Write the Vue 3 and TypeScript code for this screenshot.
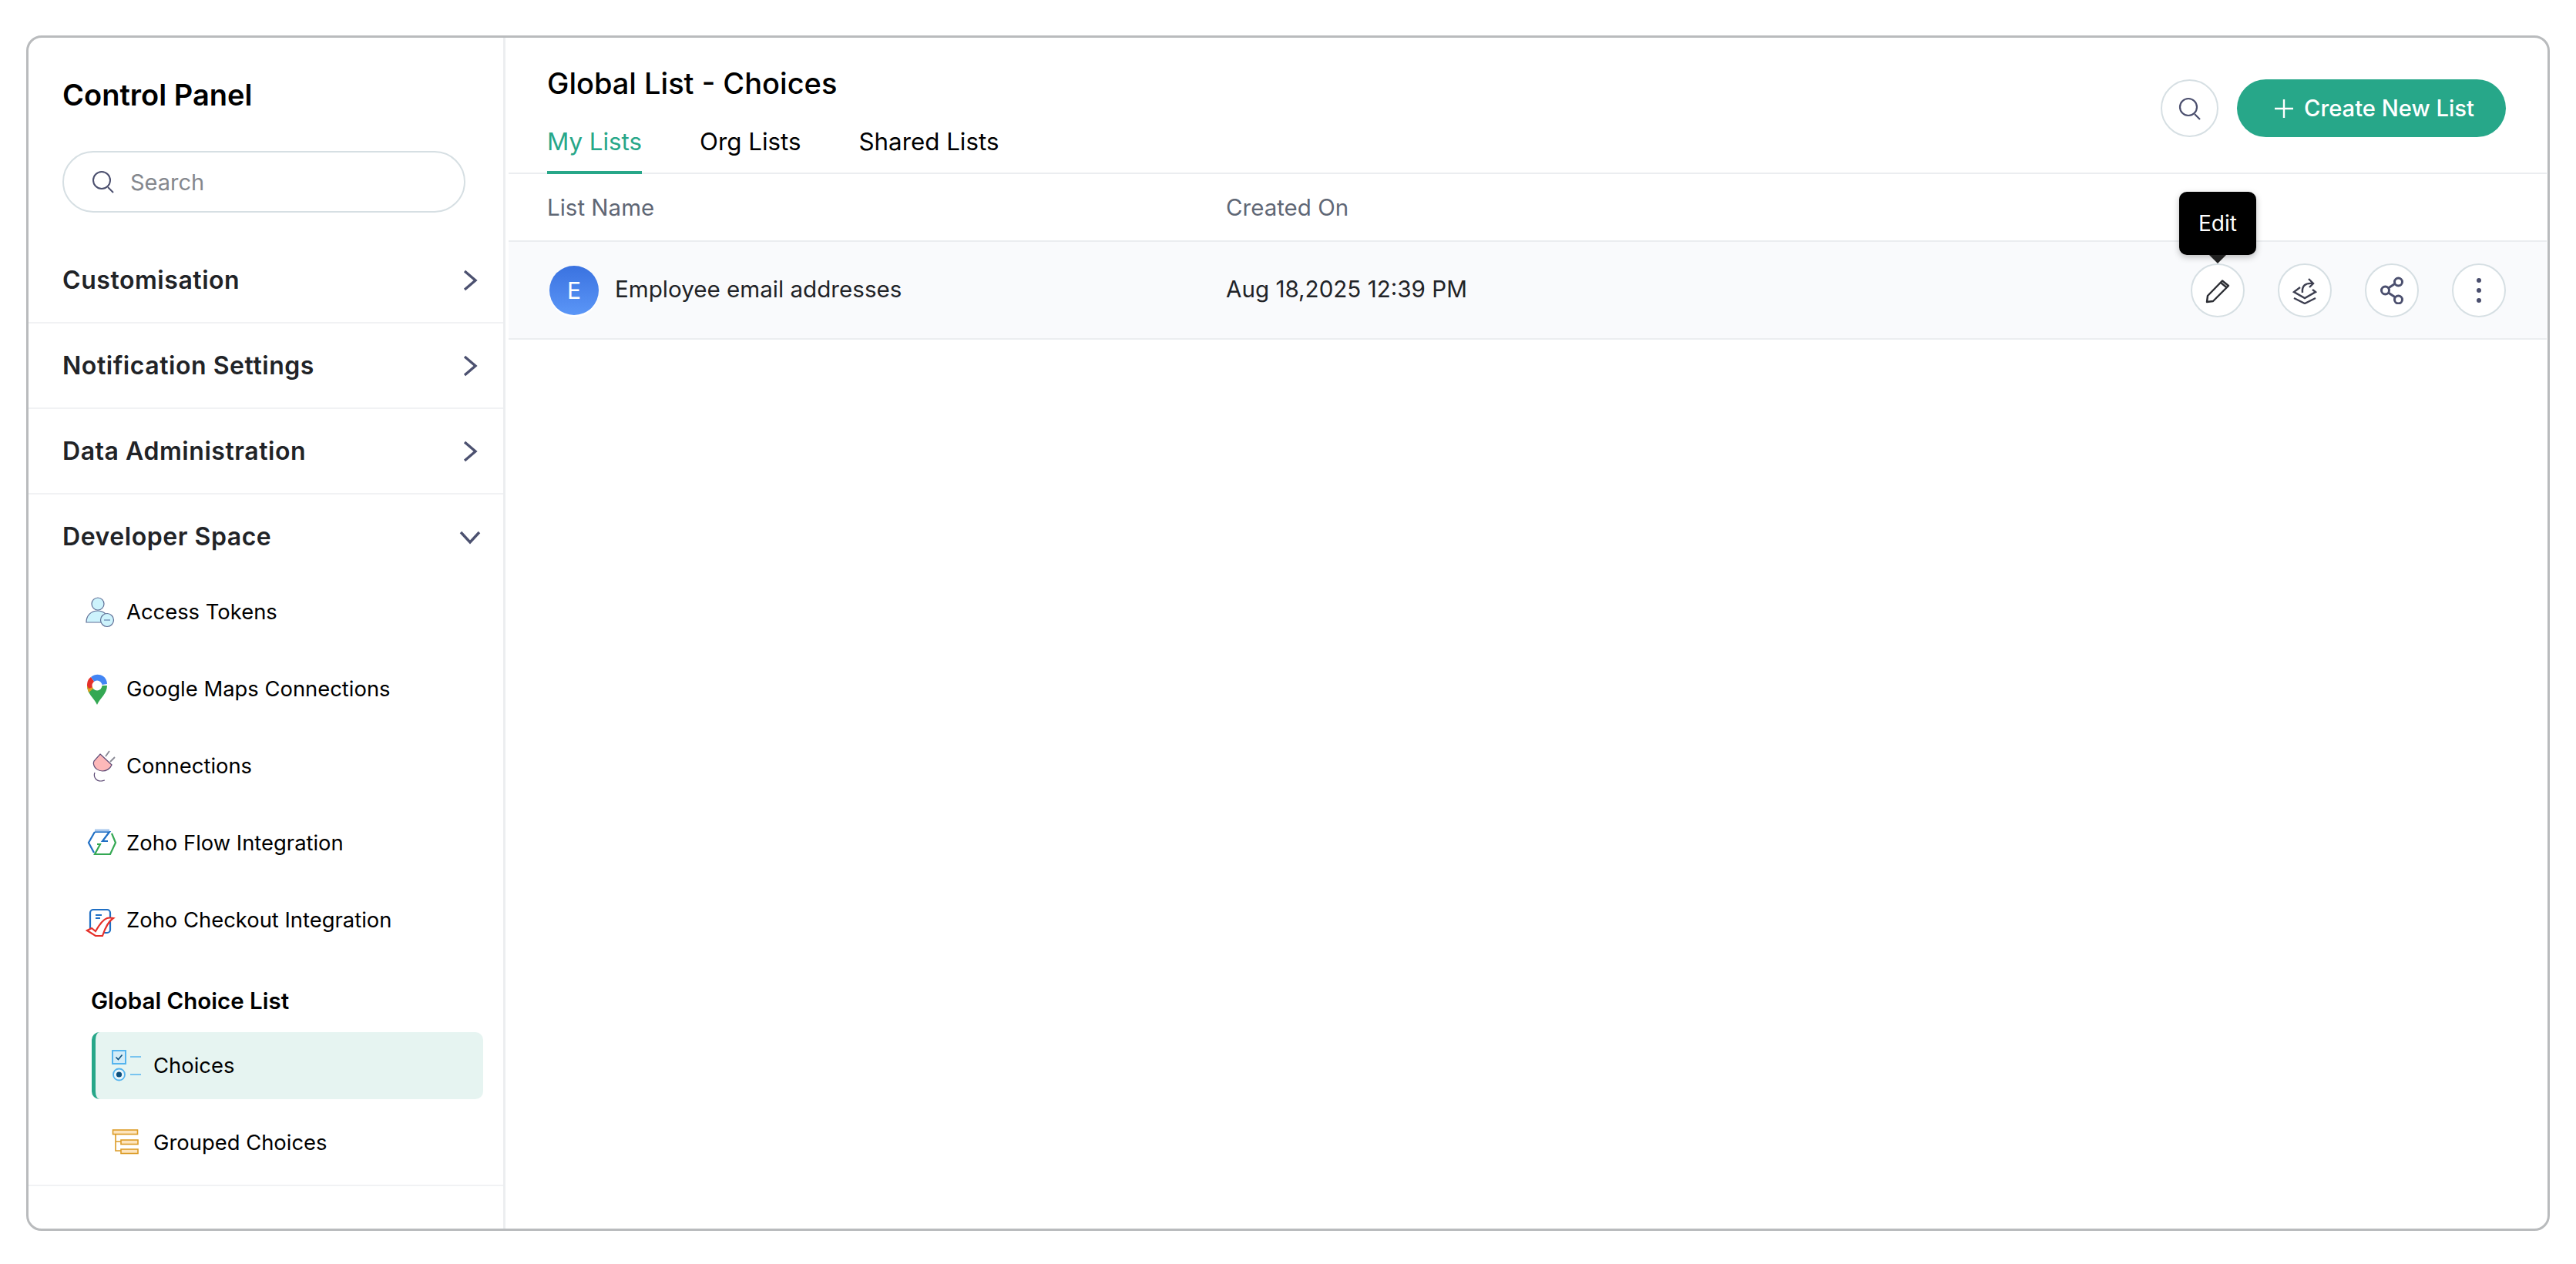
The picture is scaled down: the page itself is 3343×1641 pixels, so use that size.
<template>
  <div class="page">
    <div class="frame">
      <aside class="sidebar">
        <h2 class="side-title">Control Panel</h2>
        <div class="side-search">
          <svg class="search-icon" viewBox="0 0 32 32" fill="none">
            <circle cx="14" cy="14" r="11" stroke="#4b4f6e" stroke-width="2" />
            <path d="M22 23l7 7" stroke="#4b4f6e" stroke-width="2" />
          </svg>
          <span>Search</span>
        </div>

        <div v-for="row in closedRows" :key="row" class="acc-row">
          <span>{{ row }}</span>
          <svg class="chev" viewBox="0 0 28 28" fill="none">
            <path d="M7 2l14 12L7 26" stroke="#4c5170" stroke-width="3.4" />
          </svg>
        </div>

        <div class="acc-open">
          <div class="acc-head">
            <span>Developer Space</span>
            <svg class="chev" viewBox="0 0 28 28" fill="none">
              <path d="M2 8l12 13L26 8" stroke="#4c5170" stroke-width="3.4" />
            </svg>
          </div>

          <div class="sub-list">
            <div class="sub-item">
              <svg class="item-icon" viewBox="0 0 44 44" fill="none" stroke="#5f6f96" stroke-width="1.2">
                <circle cx="21" cy="14" r="8" fill="#cdf3fc" />
                <path d="M6 38c0-9 6-15 15-15 4 0 7 1 10 4v11z" fill="#cdf3fc" />
                <circle cx="33" cy="35" r="8.5" fill="#cdf3fc" />
                <path d="M29 35h8" stroke="#7d9cc0" stroke-width="1.6" />
              </svg>
              <span>Access Tokens</span>
            </div>
            <div class="sub-item">
              <svg class="item-icon" viewBox="0 0 44 44">
                <path d="M20 45C16 36 7 31 7 20h26c0 11-9 16-13 25z" fill="#34a853" />
                <path d="M9 29l11-9-6-4-7 4c0 3 1 6 2 9z" fill="#dca11f" />
                <path d="M7 20C7 14 9 11 12 9l8 11-11 4z" fill="#e5302a" />
                <path d="M12 9c5-4 11-4 16-1 3 2 5 6 5 10l-13 2z" fill="#4285f4" />
                <circle cx="20" cy="20" r="6.5" fill="#fff" />
              </svg>
              <span>Google Maps Connections</span>
            </div>
            <div class="sub-item">
              <svg class="item-icon" viewBox="0 0 44 44" fill="none" stroke="#5d4a75" stroke-width="1.2">
                <path d="M24 9l15 14c-2 5-7 8-12 8-6 0-10-4-11-7-1-2-1-4 0-6z" fill="#fdb8b9" />
                <path d="M31 12l5-7M37 19l6-6" stroke="#8a8a95" stroke-width="1.8" />
                <path d="M17 33c-2 5 1 11 8 11 2 0 4-1 5-1" />
              </svg>
              <span>Connections</span>
            </div>
            <div class="sub-item">
              <svg class="item-icon" viewBox="0 0 44 44" fill="none" stroke-width="2.2">
                <path d="M17 9h19l-9 12h7M17 9L9 23l7 13" stroke="#1f6fc4" />
                <path d="M17 7h19" stroke="#a8c7ec" stroke-width="3" />
                <path d="M39 11l5 12-7 15H17l7-13h-4" stroke="#34a853" />
              </svg>
              <span>Zoho Flow Integration</span>
            </div>
            <div class="sub-item">
              <svg class="item-icon" viewBox="0 0 44 44" fill="none">
                <rect x="11" y="10" width="26" height="30" rx="4" stroke="#1f6fc4" stroke-width="2.2" />
                <path d="M18 17h8M18 21h6" stroke="#1f6fc4" stroke-width="2" />
                <path d="M7 37l6-3 5 4c4-7 9-15 15-17 3-1 8 0 8 0-6 4-11 14-14 23h-9z" fill="#fff" stroke="#e5302a" stroke-width="2.2" />
              </svg>
              <span>Zoho Checkout Integration</span>
            </div>
          </div>

          <div class="group-title">Global Choice List</div>
          <div class="group-item active">
            <svg class="item-icon" viewBox="0 0 44 44" fill="none">
              <rect x="5" y="3" width="17" height="17" fill="#d4ecf7" stroke="#55b4ee" stroke-width="2" />
              <path d="M9.500 11.500l3 3 5-6" stroke="#0d4f7c" stroke-width="1.6" />
              <path d="M28 11h14M28 34h14" stroke="#55b4ee" stroke-width="1.5" />
              <circle cx="13.500" cy="34" r="7.500" fill="#eaf6fb" stroke="#55b4ee" stroke-width="1.8" />
              <circle cx="13.500" cy="34" r="3.600" fill="#0d4f7c" />
            </svg>
            <span>Choices</span>
          </div>
          <div class="group-item">
            <svg class="item-icon" viewBox="0 0 44 44" fill="none" stroke="#dc9c27" stroke-width="1.6">
              <path d="M9 12v21h7M9 21h7" />
              <rect x="5.500" y="6" width="32" height="5.500" fill="#fde4bd" />
              <rect x="16" y="19" width="22" height="5.500" fill="#fde4bd" />
              <rect x="16" y="31" width="22" height="5.500" fill="#fde4bd" />
            </svg>
            <span>Grouped Choices</span>
          </div>
        </div>
      </aside>

      <main class="main">
        <header class="head">
          <div>
            <h1 class="title">Global List - Choices</h1>
            <nav class="tabs">
              <a v-for="t in tabs" :key="t" class="tab" :class="{ on: t === activeTab }">{{ t }}</a>
            </nav>
          </div>
          <div class="head-actions">
            <button class="search-btn">
              <svg viewBox="0 0 32 32" fill="none">
                <circle cx="14" cy="14" r="11" stroke="#4b4f6e" stroke-width="2.2" />
                <path d="M22 23l7 7" stroke="#4b4f6e" stroke-width="2.2" />
              </svg>
            </button>
            <button class="create-btn">
              <svg viewBox="0 0 26 26" fill="none">
                <path d="M13 1v24M1 13h24" stroke="#fff" stroke-width="2.4" />
              </svg>
              Create New List
            </button>
          </div>
        </header>

        <div class="table-head">
          <span class="col-name">List Name</span>
          <span>Created On</span>
        </div>

        <div class="table-row">
          <div class="col-name name-cell">
            <span class="avatar">E</span>
            <span class="cell-text">Employee email addresses</span>
          </div>
          <span class="cell-text date">Aug 18,2025 12:39 PM</span>
          <div class="row-actions">
            <button class="icon-btn">
              <span class="tooltip">Edit</span>
              <svg viewBox="0 0 36 36" fill="none" stroke="#2b2d33" stroke-width="2.4">
                <path d="M4 33l1-8L24 5.500 32 12 12 32z" stroke-linejoin="round" />
                <path d="M22 8l8 6.500" />
              </svg>
            </button>
            <button class="icon-btn">
              <svg viewBox="0 0 36 36" fill="none" stroke="#3d3f50" stroke-width="2.4">
                <path d="M4 28l14 7 14-7" />
                <path d="M12 14L4 20l14 8 14-8-4-3" />
                <path d="M15 21c-1-9 4-13 13-12M23 3l6 6-5 5" />
              </svg>
            </button>
            <button class="icon-btn">
              <svg viewBox="0 0 36 36" fill="none" stroke="#4b4f6e" stroke-width="3">
                <circle cx="26.500" cy="7" r="5" />
                <circle cx="9.500" cy="18" r="5" />
                <circle cx="26.500" cy="30" r="5" />
                <path d="M13.500 15l9-6M13.500 21l9 6" />
              </svg>
            </button>
            <button class="icon-btn">
              <svg viewBox="0 0 36 36" fill="#4b4f6e">
                <circle cx="18" cy="5" r="3" />
                <circle cx="18" cy="18" r="3" />
                <circle cx="18" cy="31" r="3" />
              </svg>
            </button>
          </div>
        </div>
      </main>
    </div>
  </div>
</template>

<script setup lang="ts">
const closedRows: string[] = ['Customisation', 'Notification Settings', 'Data Administration']
const tabs: string[] = ['My Lists', 'Org Lists', 'Shared Lists']
const activeTab = 'My Lists'
</script>

<style>
html,
body {
  background: #fff;
}
</style>

<style scoped>
.page {
  box-sizing: border-box;
  height: 1641px;
  padding: 46px 34px 43px 34px;
  font-family: Inter, "Liberation Sans", sans-serif;
  color: #000;
}

.frame {
  display: flex;
  box-sizing: border-box;
  height: 100%;
  border: 3px solid #b9bbbd;
  border-radius: 20px;
  overflow: hidden;
}

.sidebar {
  box-sizing: border-box;
  width: 619px;
  flex-shrink: 0;
  border-right: 3px solid #eceef0;
}

.side-title {
  margin: 52px 0 0 44px;
  font-size: 38px;
  line-height: 44px;
  font-weight: 600;
}

.side-search {
  display: flex;
  align-items: center;
  gap: 19px;
  box-sizing: border-box;
  width: 523px;
  height: 80px;
  margin: 51px 0 33px 44px;
  padding-left: 35px;
  border: 2px solid #d6dfe3;
  border-radius: 40px;
  font-size: 29px;
  color: #85888e;
}

.search-icon {
  width: 32px;
  height: 32px;
}

.acc-row,
.acc-head {
  display: flex;
  justify-content: space-between;
  align-items: center;
  padding: 33px 29px 32px 44px;
  font-size: 32px;
  letter-spacing: 0.55px;
  line-height: 44px;
  font-weight: 600;
  color: #212327;
}

.acc-row {
  border-bottom: 2px solid #f1f2f4;
}

.chev {
  width: 28px;
  height: 28px;
}

.acc-open {
  padding-bottom: 11px;
  border-bottom: 2px solid #f1f2f4;
}

.acc-head {
  padding-bottom: 0;
}

.sub-list {
  padding-top: 23px;
}

.sub-item {
  display: flex;
  align-items: center;
  gap: 14px;
  height: 100.2px;
  padding-left: 69px;
  font-size: 27.4px;
}

.sub-item span {
  padding-top: 3px;
}

.item-icon {
  width: 44px;
  height: 44px;
  flex-shrink: 0;
  overflow: visible;
}

.group-title {
  margin: 38px 0 23px 81px;
  font-size: 29.5px;
  line-height: 36px;
  font-weight: 600;
}

.group-item {
  display: flex;
  align-items: center;
  gap: 14px;
  box-sizing: border-box;
  width: 508px;
  height: 87px;
  margin: 0 0 13px 82px;
  padding-left: 17px;
  border-left: 5px solid transparent;
  border-radius: 10px;
  font-size: 27.4px;
}

.group-item:last-child {
  margin-bottom: 0;
}

.group-item.active {
  background: #e6f4f1;
  border-left-color: #27a789;
}

.main {
  flex: 1;
  min-width: 0;
  margin-left: 4px;
  margin-right: 1px;
}

.head {
  display: flex;
  justify-content: space-between;
  box-sizing: border-box;
  height: 177px;
  padding: 37px 53px 0 50px;
  border-bottom: 2px solid #ebedf0;
}

.title {
  margin: 0;
  font-size: 38px;
  line-height: 44px;
  font-weight: 500;
}

.tabs {
  display: flex;
  gap: 75px;
  margin-top: 32px;
}

.tab {
  padding-bottom: 16px;
  border-bottom: 4px solid transparent;
  font-size: 31.3px;
  line-height: 44px;
}

.tab.on {
  color: #27a789;
  border-bottom-color: #27a789;
}

.head-actions {
  display: flex;
  align-items: center;
  gap: 24px;
  align-self: flex-start;
  padding-top: 17px;
}

button {
  font-family: inherit;
  padding: 0;
}

.search-btn {
  display: flex;
  align-items: center;
  justify-content: center;
  width: 75px;
  height: 75px;
  background: #fff;
  border: 2px solid #d6dfe3;
  border-radius: 50%;
}

.search-btn svg {
  width: 32px;
  height: 32px;
}

.create-btn {
  display: flex;
  align-items: center;
  gap: 13px;
  height: 75px;
  width: 349px;
  padding-left: 48px;
  border: none;
  border-radius: 38px;
  background: #27a789;
  color: #fff;
  font-size: 29.2px;
  font-weight: 500;
}

.create-btn svg {
  width: 26px;
  height: 26px;
}

.table-head {
  display: flex;
  align-items: center;
  height: 86px;
  padding-left: 50px;
  font-size: 29.5px;
  color: #5f6775;
}

.col-name {
  width: 881px;
  flex-shrink: 0;
}

.table-row {
  display: flex;
  align-items: center;
  box-sizing: border-box;
  height: 129px;
  padding: 0 53px 0 50px;
  background: #f9fafc;
  border-top: 2px solid #ebedf0;
  border-bottom: 2px solid #ebedf0;
  font-size: 29.6px;
  color: #212327;
}

.cell-text {
  padding-bottom: 3px;
}

.name-cell {
  display: flex;
  align-items: center;
  gap: 21px;
  box-sizing: border-box;
  padding-left: 3px;
}

.avatar {
  display: flex;
  align-items: center;
  justify-content: center;
  width: 64px;
  height: 64px;
  border-radius: 50%;
  background: linear-gradient(#3a72e0, #5b96f7);
  box-shadow: 0 3px 0 #fff;
  color: #fff;
  font-size: 30px;
}

.row-actions {
  display: flex;
  gap: 43px;
  margin-left: auto;
}

.icon-btn {
  position: relative;
  display: flex;
  align-items: center;
  justify-content: center;
  width: 70px;
  height: 70px;
  background: #fff;
  border: 2px solid #d6dfe3;
  border-radius: 50%;
}

.icon-btn svg {
  width: 36px;
  height: 36px;
}

.tooltip {
  position: absolute;
  left: 50%;
  bottom: 79px;
  transform: translateX(-50%);
  width: 100px;
  height: 82px;
  line-height: 82px;
  text-align: center;
  background: #000;
  border-radius: 10px;
  box-shadow: 0 3px 8px rgba(0, 0, 0, 0.25);
  color: #fff;
  font-size: 28px;
}

.tooltip::after {
  content: "";
  position: absolute;
  left: 50%;
  top: 100%;
  margin-left: -11px;
  border: 11px solid transparent;
  border-bottom-width: 0;
  border-top-color: #222;
}
</style>
